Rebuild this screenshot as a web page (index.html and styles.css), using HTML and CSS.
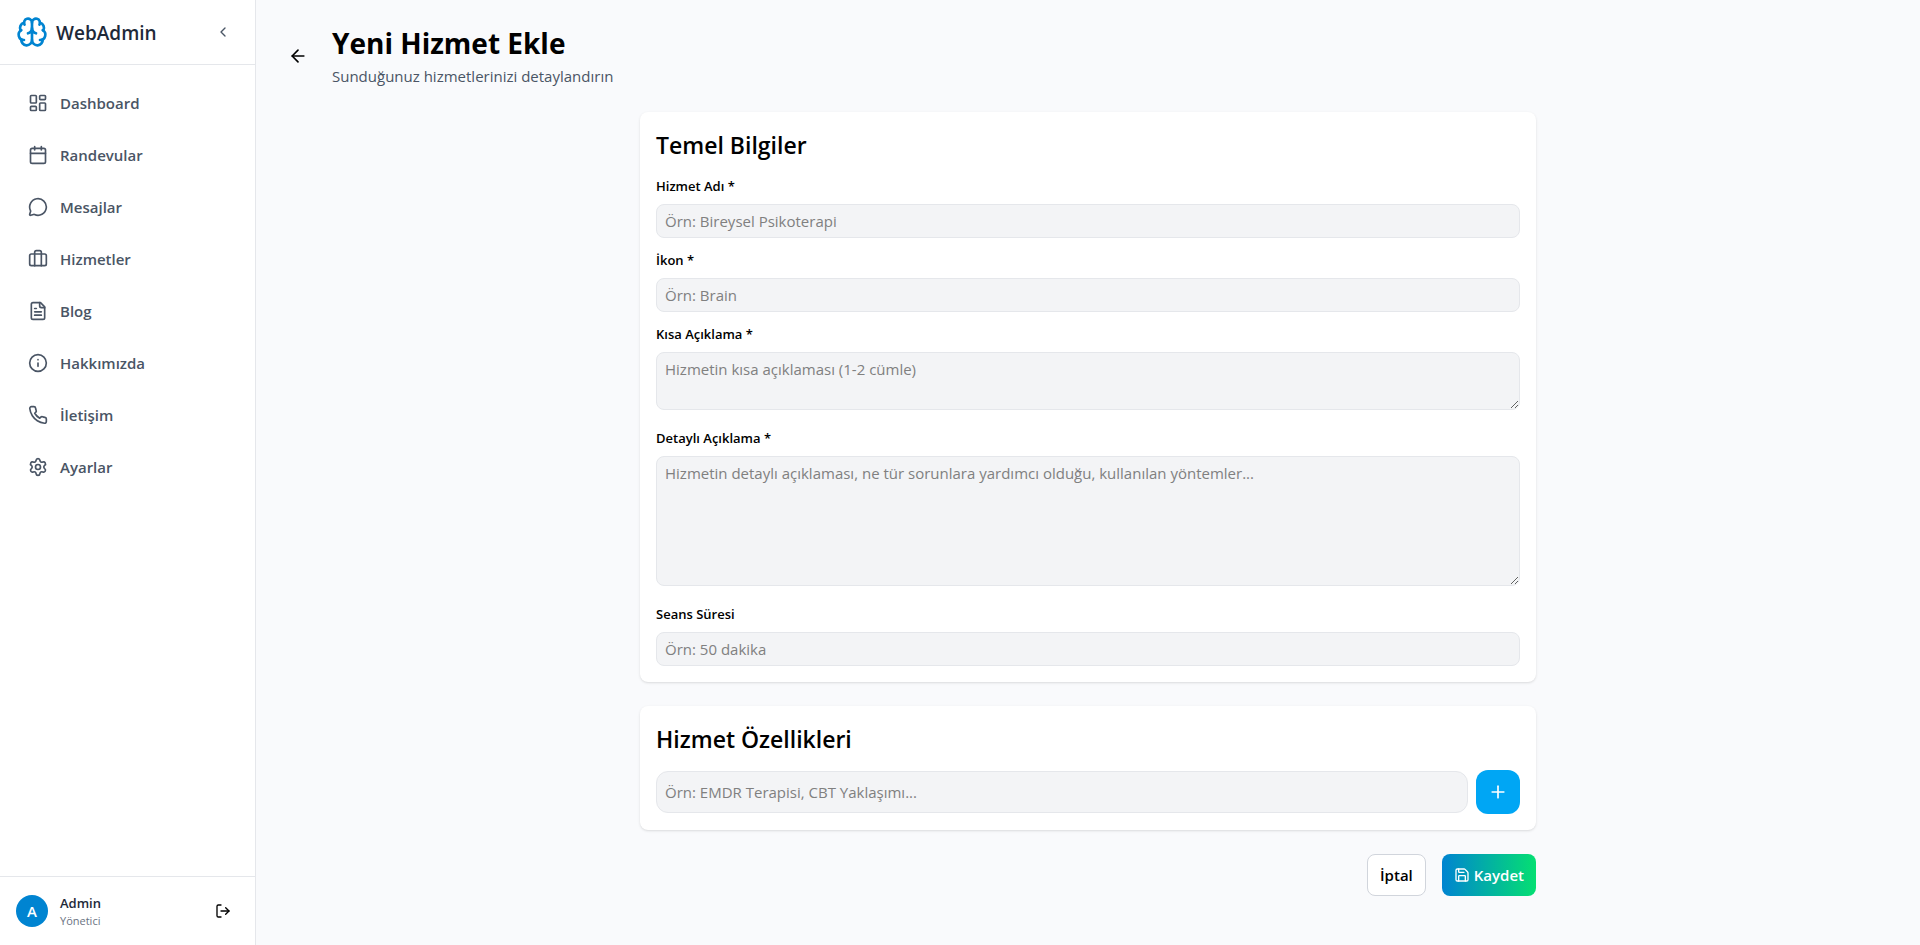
FILE: index.html
```html
<!DOCTYPE html>
<html lang="tr">
<head>
<meta charset="utf-8">
<meta name="viewport" content="width=device-width, initial-scale=1">
<title>WebAdmin</title>
<link rel="stylesheet" href="styles.css">
</head>
<body>
<div class="app">
  <aside class="sidebar">
    <div class="sidebar-head">
      <div class="brand">
        <svg class="icon icon-logo" viewBox="0 0 24 24"><path d="M12 18V5"/><path d="M15 13a4.17 4.17 0 0 1-3-4 4.17 4.17 0 0 1-3 4"/><path d="M17.598 6.5A3 3 0 1 0 12 5a3 3 0 1 0-5.598 1.5"/><path d="M17.997 5.125a4 4 0 0 1 2.526 5.77"/><path d="M18 18a4 4 0 0 0 2-7.464"/><path d="M19.967 17.483A4 4 0 1 1 12 18a4 4 0 1 1-7.967-.517"/><path d="M6 18a4 4 0 0 1-2-7.464"/><path d="M6.003 5.125a4 4 0 0 0-2.526 5.77"/></svg>
        <span class="brand-name">WebAdmin</span>
      </div>
      <button class="icon-button muted" type="button" aria-label="Menüyü daralt"><svg class="icon icon-sm" viewBox="0 0 24 24"><path d="m15 18-6-6 6-6"/></svg></button>
    </div>
    <nav class="nav">
      <a class="nav-link" href="#"><svg class="icon" viewBox="0 0 24 24"><rect width="7" height="9" x="3" y="3" rx="1"/><rect width="7" height="5" x="14" y="3" rx="1"/><rect width="7" height="9" x="14" y="12" rx="1"/><rect width="7" height="5" x="3" y="16" rx="1"/></svg>Dashboard</a>
      <a class="nav-link" href="#"><svg class="icon" viewBox="0 0 24 24"><path d="M8 2v4"/><path d="M16 2v4"/><rect width="18" height="18" x="3" y="4" rx="2"/><path d="M3 10h18"/></svg>Randevular</a>
      <a class="nav-link" href="#"><svg class="icon" viewBox="0 0 24 24"><path d="M2.992 16.342a2 2 0 0 1 .094 1.167l-1.065 3.29a1 1 0 0 0 1.236 1.168l3.413-.998a2 2 0 0 1 1.099.092 10 10 0 1 0-4.777-4.719"/></svg>Mesajlar</a>
      <a class="nav-link" href="#"><svg class="icon" viewBox="0 0 24 24"><path d="M16 20V4a2 2 0 0 0-2-2h-4a2 2 0 0 0-2 2v16"/><rect width="20" height="14" x="2" y="6" rx="2"/></svg>Hizmetler</a>
      <a class="nav-link" href="#"><svg class="icon" viewBox="0 0 24 24"><path d="M15 2H6a2 2 0 0 0-2 2v16a2 2 0 0 0 2 2h12a2 2 0 0 0 2-2V7Z"/><path d="M14 2v4a2 2 0 0 0 2 2h4"/><path d="M10 9H8"/><path d="M16 13H8"/><path d="M16 17H8"/></svg>Blog</a>
      <a class="nav-link" href="#"><svg class="icon" viewBox="0 0 24 24"><circle cx="12" cy="12" r="10"/><path d="M12 16v-4"/><path d="M12 8h.01"/></svg>Hakkımızda</a>
      <a class="nav-link" href="#"><svg class="icon" viewBox="0 0 24 24"><path d="M22 16.92v3a2 2 0 0 1-2.18 2 19.79 19.79 0 0 1-8.63-3.07 19.5 19.5 0 0 1-6-6 19.79 19.79 0 0 1-3.07-8.67A2 2 0 0 1 4.11 2h3a2 2 0 0 1 2 1.72 12.84 12.84 0 0 0 .7 2.81 2 2 0 0 1-.45 2.11L8.09 9.91a16 16 0 0 0 6 6l1.27-1.27a2 2 0 0 1 2.11-.45 12.84 12.84 0 0 0 2.81.7A2 2 0 0 1 22 16.92z"/></svg>İletişim</a>
      <a class="nav-link" href="#"><svg class="icon" viewBox="0 0 24 24"><path d="M9.671 4.136a2.34 2.34 0 0 1 4.659 0 2.34 2.34 0 0 0 3.319 1.915 2.34 2.34 0 0 1 2.33 4.033 2.34 2.34 0 0 0 0 3.831 2.34 2.34 0 0 1-2.33 4.033 2.34 2.34 0 0 0-3.319 1.915 2.34 2.34 0 0 1-4.659 0 2.34 2.34 0 0 0-3.32-1.915 2.34 2.34 0 0 1-2.33-4.033 2.34 2.34 0 0 0 0-3.831A2.34 2.34 0 0 1 6.35 6.051a2.34 2.34 0 0 0 3.319-1.915"/><circle cx="12" cy="12" r="3"/></svg>Ayarlar</a>
    </nav>
    <div class="account">
      <span class="avatar">A</span>
      <div class="account-text">
        <span class="account-name">Admin</span>
        <span class="account-role">Yönetici</span>
      </div>
      <button class="icon-button" type="button" aria-label="Çıkış yap"><svg class="icon icon-sm" viewBox="0 0 24 24"><path d="m16 17 5-5-5-5"/><path d="M21 12H9"/><path d="M9 21H5a2 2 0 0 1-2-2V5a2 2 0 0 1 2-2h4"/></svg></button>
    </div>
  </aside>

  <main class="main">
    <header class="page-head">
      <a class="back" href="#" aria-label="Geri"><svg class="icon" viewBox="0 0 24 24"><path d="m12 19-7-7 7-7"/><path d="M19 12H5"/></svg></a>
      <div>
        <h1 class="page-title">Yeni Hizmet Ekle</h1>
        <p class="page-subtitle">Sunduğunuz hizmetlerinizi detaylandırın</p>
      </div>
    </header>

    <form class="form">
      <section class="card">
        <h2 class="card-title">Temel Bilgiler</h2>
        <div class="fields">
          <div class="field">
            <label class="label" for="name">Hizmet Adı *</label>
            <input class="control" id="name" type="text" placeholder="Örn: Bireysel Psikoterapi">
          </div>
          <div class="field">
            <label class="label" for="icon">İkon *</label>
            <input class="control" id="icon" type="text" placeholder="Örn: Brain">
          </div>
          <div class="field field-area">
            <label class="label" for="summary">Kısa Açıklama *</label>
            <textarea class="control" id="summary" rows="2" placeholder="Hizmetin kısa açıklaması (1-2 cümle)"></textarea>
          </div>
          <div class="field field-area">
            <label class="label" for="details">Detaylı Açıklama *</label>
            <textarea class="control" id="details" rows="5" placeholder="Hizmetin detaylı açıklaması, ne tür sorunlara yardımcı olduğu, kullanılan yöntemler..."></textarea>
          </div>
          <div class="field">
            <label class="label" for="duration">Seans Süresi</label>
            <input class="control" id="duration" type="text" placeholder="Örn: 50 dakika">
          </div>
        </div>
      </section>

      <section class="card">
        <h2 class="card-title">Hizmet Özellikleri</h2>
        <div class="feature-row">
          <input class="control control-lg" type="text" aria-label="Hizmet özelliği" placeholder="Örn: EMDR Terapisi, CBT Yaklaşımı...">
          <button class="add" type="button" aria-label="Ekle"><svg class="icon" viewBox="0 0 24 24"><path d="M5 12h14"/><path d="M12 5v14"/></svg></button>
        </div>
      </section>

      <div class="actions">
        <button class="button button-outline" type="button">İptal</button>
        <button class="button button-primary" type="submit"><svg class="icon icon-sm" viewBox="0 0 24 24"><path d="M15.2 3a2 2 0 0 1 1.4.6l3.8 3.8a2 2 0 0 1 .6 1.4V19a2 2 0 0 1-2 2H5a2 2 0 0 1-2-2V5a2 2 0 0 1 2-2z"/><path d="M17 21v-7a1 1 0 0 0-1-1H8a1 1 0 0 0-1 1v7"/><path d="M7 3v4a1 1 0 0 0 1 1h7"/></svg>Kaydet</button>
      </div>
    </form>
  </main>
</div>
</body>
</html>
```

FILE: styles.css
```css
*, *::before, *::after { box-sizing: border-box; }

body, h1, h2, p { margin: 0; }

body {
  font-family: "Segoe UI", "Open Sans", "Noto Sans", sans-serif;
  font-size: 15px;
  line-height: 24px;
  color: #000;
  background: #f9fafc;
}

button, input, textarea { font: inherit; color: inherit; }
button { cursor: pointer; }
a { color: inherit; text-decoration: none; }

.icon {
  flex: none;
  display: block;
  width: 20px;
  height: 20px;
  fill: none;
  stroke: currentColor;
  stroke-width: 2;
  stroke-linecap: round;
  stroke-linejoin: round;
}
.icon-sm { width: 16px; height: 16px; }
.icon-logo { width: 32px; height: 32px; color: #0084d1; }

.app {
  display: grid;
  grid-template-columns: 256px minmax(0, 1fr);
  min-height: 100vh;
}

.sidebar {
  display: flex;
  flex-direction: column;
  background: #fff;
  border-right: 1px solid #e5e7eb;
}
.sidebar-head {
  display: flex;
  align-items: center;
  justify-content: space-between;
  padding: 16px;
  border-bottom: 1px solid #e5e7eb;
}
.brand { display: flex; align-items: center; gap: 8px; }
.brand-name { padding-top: 2px; font-size: 19px; font-weight: 600; line-height: 28px; color: #1e2939; }
.icon-button {
  padding: 8px;
  border: 0;
  border-radius: 8px;
  background: none;
}
.muted { color: #4a5565; }

.nav {
  flex: 1;
  display: flex;
  flex-direction: column;
  gap: 8px;
  padding: 16px;
}
.nav-link {
  display: flex;
  align-items: center;
  gap: 12px;
  padding: 10px 12px;
  border-radius: 8px;
  font-weight: 600;
  color: #4a5565;
}

.account {
  display: flex;
  align-items: center;
  gap: 12px;
  padding: 16px;
  border-top: 1px solid #e5e7eb;
}
.avatar {
  display: grid;
  place-items: center;
  width: 32px;
  height: 32px;
  border-radius: 50%;
  background: #0084d1;
  color: #fff;
  font-weight: 600;
}
.account-text { flex: 1; display: flex; flex-direction: column; }
.account-name { font-size: 13px; font-weight: 600; line-height: 20px; color: #1e2939; }
.account-role { font-size: 11px; line-height: 16px; color: #6a7282; }

.main { padding: 24px 32px; }
.page-head {
  display: flex;
  align-items: center;
  gap: 24px;
  margin-bottom: 24px;
}
.page-title { margin-bottom: 2px; font-size: 28px; font-weight: 700; line-height: 38px; }
.page-subtitle { color: #4a5565; }

.form {
  display: flex;
  flex-direction: column;
  gap: 24px;
  max-width: 896px;
  margin: 0 auto;
}
.card {
  padding: 16px;
  border-radius: 8px;
  background: #fff;
  box-shadow: 0 1px 3px rgba(0, 0, 0, 0.1), 0 1px 2px -1px rgba(0, 0, 0, 0.1);
}
.card-title {
  margin-bottom: 14px;
  font-size: 23px;
  font-weight: 600;
  line-height: 34px;
}
.fields { display: flex; flex-direction: column; gap: 12px; }
.field { display: flex; flex-direction: column; gap: 8px; }
.field-area { padding-bottom: 6px; }
.label { font-size: 13px; font-weight: 600; line-height: 20px; }
.control {
  display: block;
  width: 100%;
  padding: 4px 8px;
  border: 1px solid #e5e7eb;
  border-radius: 8px;
  background: #f3f4f6;
}
.control::placeholder { color: #808080; }
.control-lg { padding: 8px; border-radius: 12px; }
.feature-row { display: flex; align-items: center; gap: 8px; }
.add {
  padding: 12px;
  border: 0;
  border-radius: 12px;
  background: #00a6f4;
  color: #fff;
}

.actions { display: flex; justify-content: flex-end; gap: 16px; }
.button {
  display: flex;
  align-items: center;
  gap: 4px;
  padding: 8px 12px;
  border: 1px solid transparent;
  border-radius: 8px;
  font-weight: 600;
}
.button-outline { border-color: #d1d5dc; background: #fff; }
.button-primary {
  border: 0;
  padding: 9px 12px;
  background: linear-gradient(to right, #0084d1, #05df72);
  color: #fff;
}
```
